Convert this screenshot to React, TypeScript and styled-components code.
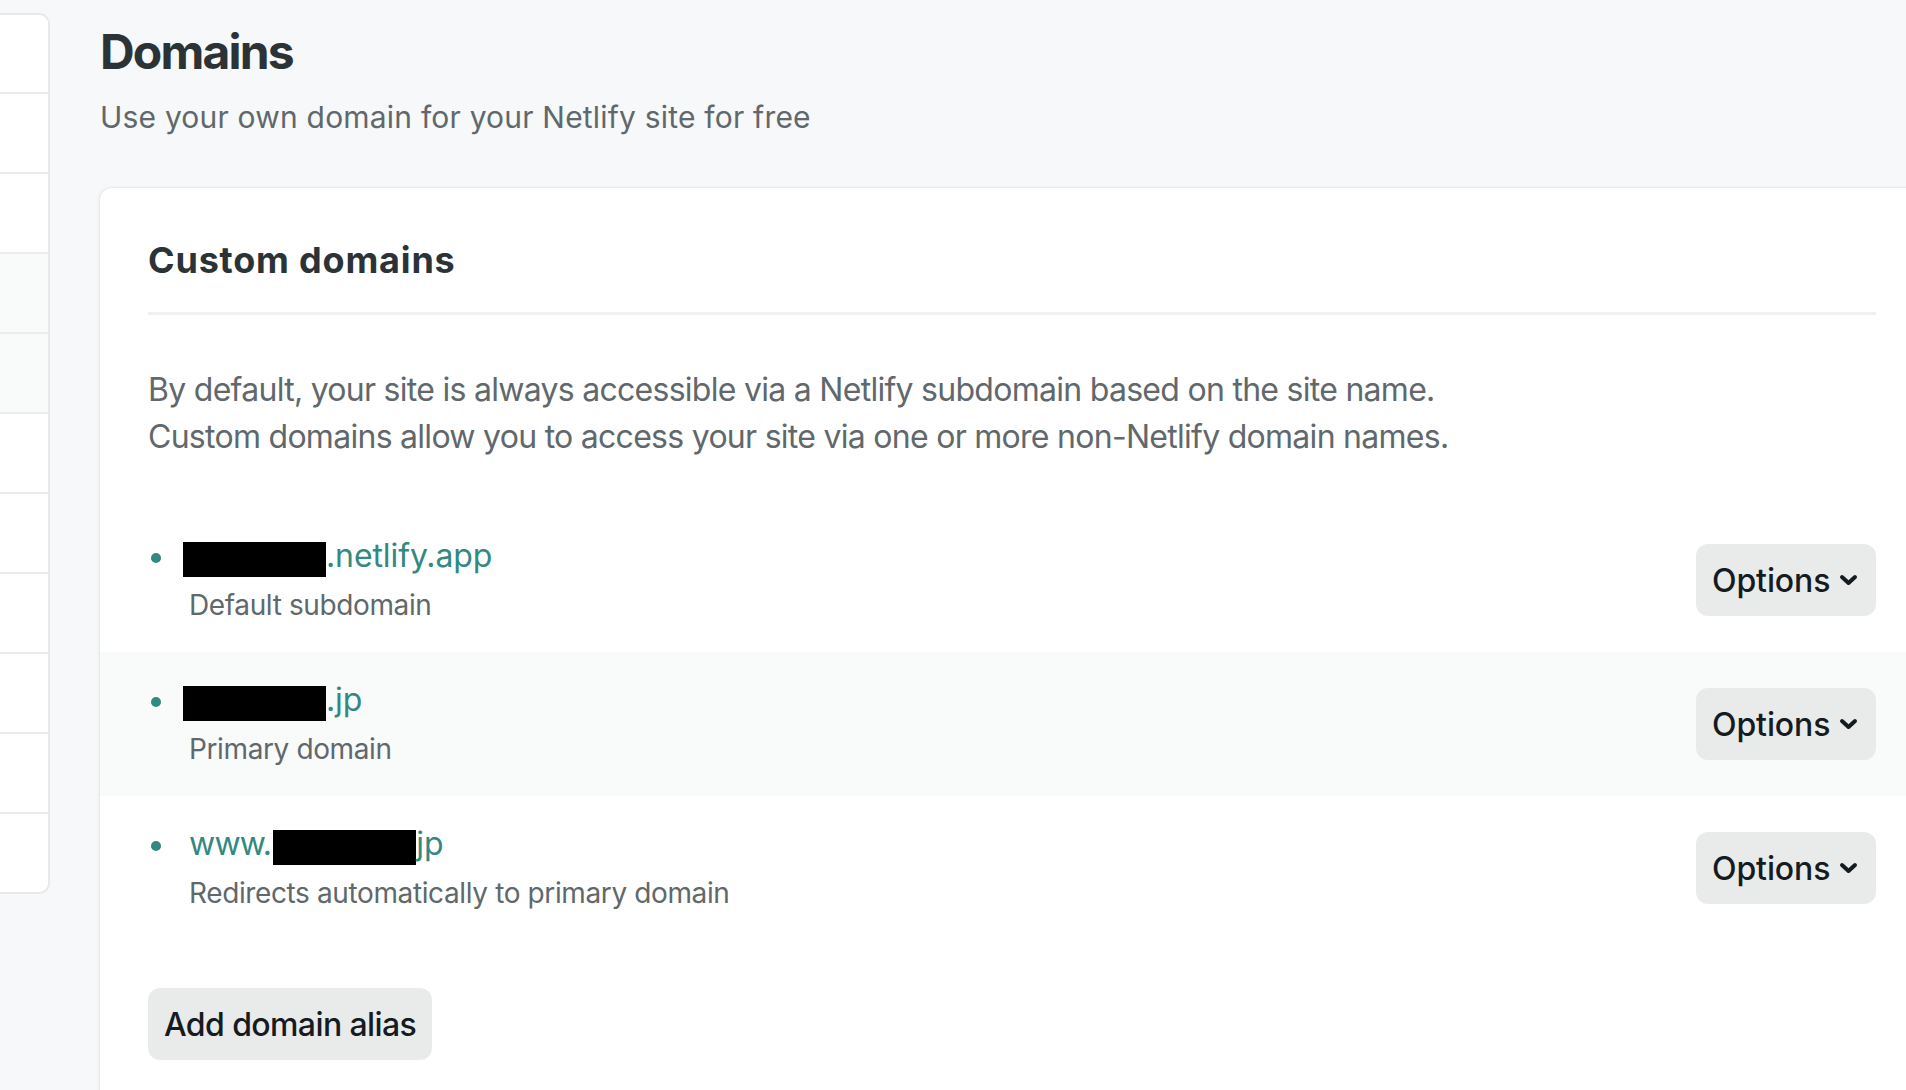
import React from "react";
import styled, { createGlobalStyle } from "styled-components";

const GlobalStyle = createGlobalStyle`
  html, body {
    margin: 0;
    padding: 0;
    background: #f6f8f9;
    overflow: hidden;
  }
  body {
    font-family: Inter, "Noto Sans", "Liberation Sans", sans-serif;
    -webkit-font-smoothing: antialiased;
  }
`;

const Page = styled.div`
  display: flex;
  align-items: flex-start;
  width: 1906px;
  height: 1090px;
`;

const Sidebar = styled.nav`
  flex: 0 0 48px;
  margin-top: 13px;
  background: #ffffff;
  border: 2px solid #e8eaea;
  border-left: none;
  border-radius: 0 11px 11px 0;
  overflow: hidden;
`;

const SideItem = styled.div<{ $shade?: boolean; $first?: boolean }>`
  height: ${(p) => (p.$first ? 77 : 78)}px;
  background: ${(p) => (p.$shade ? "#f9fafa" : "#ffffff")};
  & + & {
    border-top: 2px solid #ebeded;
  }
`;

const Main = styled.main`
  flex: 0 0 1824px;
  margin-left: 50px;
  padding-top: 23px;
`;

const Title = styled.h1`
  margin: 0;
  font-size: 48px;
  line-height: 58px;
  font-weight: 700;
  color: #2b3337;
  letter-spacing: -1.8px;
`;

const Subtitle = styled.p`
  margin: 18px 0 0;
  font-size: 30px;
  line-height: 36px;
  font-weight: 400;
  color: #60686c;
  letter-spacing: 0.2px;
`;

const Card = styled.section`
  margin-top: 53px;
  background: #ffffff;
  border-radius: 12px 0 0 0;
  box-shadow: 0 0 0 1px rgba(14, 30, 37, 0.03), -1px 0 4px rgba(14, 30, 37, 0.06);
  min-height: 920px;
`;

const CardHeader = styled.div`
  margin: 0 48px;
  padding-top: 50px;
  padding-bottom: 30px;
  border-bottom: 3px solid #eff1f1;
`;

const CardTitle = styled.h2`
  margin: 0;
  font-size: 36px;
  line-height: 44px;
  font-weight: 700;
  color: #2b3337;
  letter-spacing: 0.8px;
`;

const Intro = styled.p`
  margin: 51px 48px 0;
  font-size: 32px;
  line-height: 47px;
  color: #60686c;
  letter-spacing: -0.72px;
`;

const DomainList = styled.ul`
  list-style: none;
  margin: 48px 0 0;
  padding: 0;
`;

const DomainRow = styled.li<{ $shade?: boolean }>`
  display: flex;
  align-items: center;
  height: 144px;
  padding: 0 48px;
  background: ${(p) => (p.$shade ? "#f9fafa" : "transparent")};
`;

const Bullet = styled.span`
  flex: 0 0 10px;
  width: 10px;
  height: 10px;
  margin: 45px 24px 0 3px;
  border-radius: 50%;
  background: #32897f;
  align-self: flex-start;
`;

const DomainInfo = styled.div`
  flex: 1;
  padding: 28px 0 30px 4px;
`;

const DomainName = styled.a`
  display: block;
  font-size: 32px;
  line-height: 40px;
  color: #32897f;
  text-decoration: none;
  white-space: nowrap;
  letter-spacing: -0.1px;
`;

const Prefix = styled.span`
  letter-spacing: -0.8px;
`;

const Redacted = styled.span<{ $lead?: boolean }>`
  display: inline-block;
  width: 143px;
  height: 35px;
  margin-left: ${(p) => (p.$lead ? -6 : 2)}px;
  background: #000000;
  vertical-align: -10px;
`;

const DomainNote = styled.div`
  margin-top: 10px;
  font-size: 28px;
  line-height: 36px;
  color: #60686c;
  letter-spacing: -0.38px;
`;

const GrayButton = styled.button`
  display: inline-flex;
  align-items: center;
  height: 72px;
  border: none;
  border-radius: 12px;
  background: #e9ebeb;
  color: #151b20;
  font-family: inherit;
  font-size: 32px;
  font-weight: 500;
  cursor: pointer;
`;

const OptionsButton = styled(GrayButton)`
  width: 180px;
  padding: 0 18px 0 16px;
  justify-content: space-between;
  letter-spacing: -0.1px;
`;

const AliasButton = styled(GrayButton)`
  margin: 48px 0 0 48px;
  padding: 0 16px;
  letter-spacing: -0.6px;
`;

const Chevron = () => (
  <svg width="19" height="12" viewBox="0 0 19 12">
    <polyline
      points="3,3 9.5,9 16,3"
      fill="none"
      stroke="#151b20"
      strokeWidth="4"
      strokeLinecap="round"
      strokeLinejoin="round"
    />
  </svg>
);

type Domain = {
  prefix?: string;
  suffix: string;
  note: string;
  shade?: boolean;
};

const domains: Domain[] = [
  { suffix: ".netlify.app", note: "Default subdomain" },
  { suffix: ".jp", note: "Primary domain", shade: true },
  { prefix: "www.", suffix: "jp", note: "Redirects automatically to primary domain" },
];

export default function App() {
  return (
    <>
      <GlobalStyle />
      <Page>
        <Sidebar>
          {Array.from({ length: 11 }).map((_, i) => (
            <SideItem key={i} $first={i === 0} $shade={i === 3 || i === 4} />
          ))}
        </Sidebar>
        <Main>
          <Title>Domains</Title>
          <Subtitle>Use your own domain for your Netlify site for free</Subtitle>
          <Card>
            <CardHeader>
              <CardTitle>Custom domains</CardTitle>
            </CardHeader>
            <Intro>
              By default, your site is always accessible via a Netlify subdomain based on the site name.
              <br />
              Custom domains allow you to access your site via one or more non-Netlify domain names.
            </Intro>
            <DomainList>
              {domains.map((d) => (
                <DomainRow key={d.note} $shade={d.shade}>
                  <Bullet />
                  <DomainInfo>
                    <DomainName href="#">
                      {d.prefix && <Prefix>{d.prefix}</Prefix>}
                      <Redacted $lead={!d.prefix} />
                      {d.suffix}
                    </DomainName>
                    <DomainNote>{d.note}</DomainNote>
                  </DomainInfo>
                  <OptionsButton>
                    Options
                    <Chevron />
                  </OptionsButton>
                </DomainRow>
              ))}
            </DomainList>
            <AliasButton>Add domain alias</AliasButton>
          </Card>
        </Main>
      </Page>
    </>
  );
}
